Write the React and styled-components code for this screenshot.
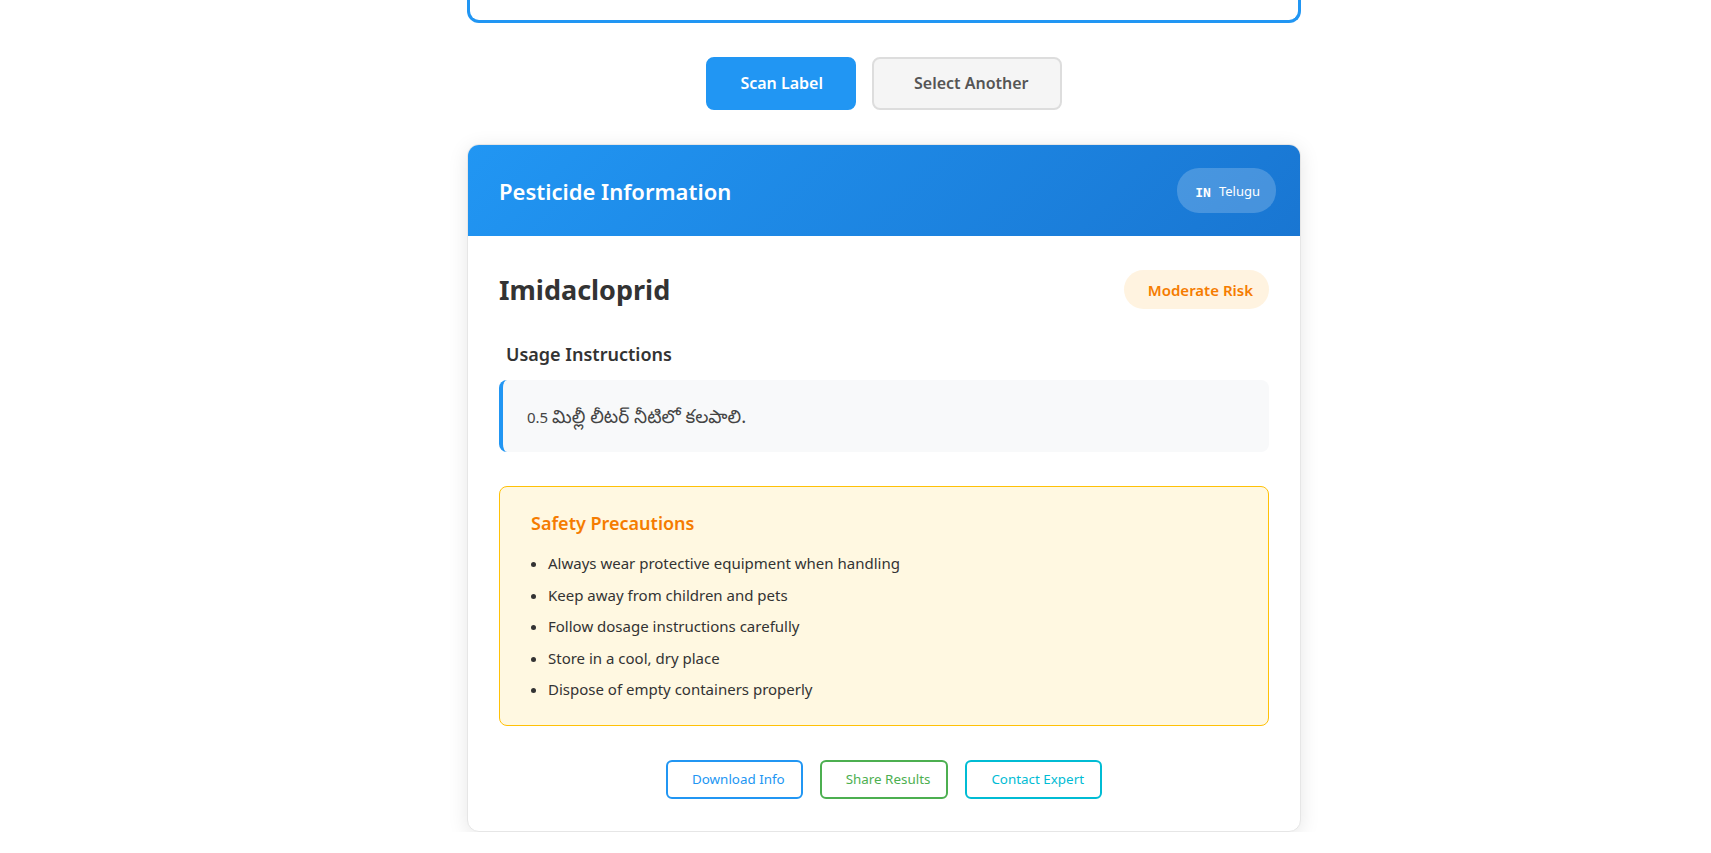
import React from 'react';
import styled, { createGlobalStyle } from 'styled-components';

const GlobalStyle = createGlobalStyle`
    body {
        margin: 0;
        background: #ffffff;
        font-family: 'Segoe UI', 'Noto Sans', 'Noto Sans Telugu', sans-serif;
        color: #333333;
    }
`;

const Page = styled.div`
    padding-left: 57px;
    display: flex;
    justify-content: center;
`;

const Column = styled.div`
    width: 834px;
    display: flex;
    flex-direction: column;
`;

// 스크롤로 잘린 이미지 미리보기 박스의 아랫부분
const PreviewEdge = styled.div`
    height: 20px;
    border: 3px solid #2196f3;
    border-top: none;
    border-radius: 0 0 12px 12px;
`;

const ControlRow = styled.div`
    display: flex;
    justify-content: center;
    gap: 16px;
    margin: 34px 0;
`;

const ControlButton = styled.button`
    font-family: inherit;
    font-size: 16px;
    font-weight: 600;
    line-height: 21px;
    padding: 14px 31px 14px ${p => (p.primary ? '32px' : '40px')};
    border-radius: 8px;
    border: 2px solid ${p => (p.primary ? '#2196f3' : '#dddddd')};
    background: ${p => (p.primary ? '#2196f3' : '#f5f5f5')};
    color: ${p => (p.primary ? '#ffffff' : '#555555')};
    cursor: pointer;
`;

const Card = styled.div`
    background: #ffffff;
    border-radius: 12px;
    overflow: hidden;
    box-shadow: 0 4px 20px rgba(0, 0, 0, 0.1);
    border: 1px solid #e6e6e6;
`;

const CardHeader = styled.div`
    display: flex;
    justify-content: space-between;
    align-items: center;
    padding: 23px 24px 23px 31px;
    background: linear-gradient(135deg, #2196f3 0%, #1976d2 100%);
    color: #ffffff;
`;

const HeaderTitle = styled.h2`
    margin: 0;
    font-size: 22px;
    font-weight: 600;
`;

const LangPill = styled.div`
    display: flex;
    align-items: center;
    gap: 8px;
    height: 45px;
    padding: 0 16px 0 18px;
    border-radius: 22px;
    background: rgba(255, 255, 255, 0.2);
    font-size: 13px;
`;

const Flag = styled.span`
    font-family: 'DejaVu Sans Mono', monospace;
    font-weight: 700;
    font-size: 13px;
    margin-top: 3px;
`;

const CardBody = styled.div`
    padding: 32px 31px 32px 31px;
`;

const NameRow = styled.div`
    display: flex;
    justify-content: space-between;
    align-items: center;
    height: 43px;
    margin-bottom: 31px;
`;

const Name = styled.h1`
    margin: 0;
    font-size: 27px;
    font-weight: 700;
    color: #333333;
`;

const RiskBadge = styled.span`
    display: inline-flex;
    align-items: center;
    height: 39px;
    padding: 0 16px 0 24px;
    border-radius: 20px;
    background: #fff3e0;
    color: #f57c00;
    font-size: 15px;
    font-weight: 600;
`;

const SectionTitle = styled.h3`
    margin: 0 0 14px 7px;
    font-size: 18px;
    font-weight: 600;
    line-height: 24px;
    color: #333333;
`;

const UsageBox = styled.div`
    background: #f8f9fa;
    border-left: 4px solid #2196f3;
    border-radius: 8px;
    padding: 23px 24px 22px 24px;
    font-size: 15px;
    line-height: 25px;
    color: #444444;
`;

const TeluguText = styled.span`
    font-size: 18.6px;
    line-height: 25px;
`;

const SafetyBox = styled.div`
    margin-top: 34px;
    background: #fff8e1;
    border: 1px solid #ffc107;
    border-radius: 8px;
    padding: 24px 31px 24px 31px;
`;

const SafetyTitle = styled.h3`
    margin: 0 0 16px 0;
    font-size: 18px;
    font-weight: 600;
    line-height: 24px;
    color: #f57c00;
`;

const SafetyList = styled.ul`
    margin: 0;
    padding-left: 17px;
`;

const SafetyItem = styled.li`
    font-size: 15px;
    line-height: 24px;
    color: #333333;
    & + & {
        margin-top: 7.6px;
    }
`;

const ActionRow = styled.div`
    display: flex;
    justify-content: center;
    gap: 17px;
    margin-top: 34px;
`;

const ActionButton = styled.button`
    font-family: inherit;
    font-size: 13.4px;
    line-height: 19px;
    padding: 8px 16px 8px 24px;
    border-radius: 6px;
    background: #ffffff;
    border: 2px solid ${p => p.tone};
    color: ${p => p.tone};
    cursor: pointer;
`;

const precautions = [
    'Always wear protective equipment when handling',
    'Keep away from children and pets',
    'Follow dosage instructions carefully',
    'Store in a cool, dry place',
    'Dispose of empty containers properly',
];

const App = () => {
    return (
        <Page>
            <GlobalStyle />
            <Column>
                <PreviewEdge />
                <ControlRow>
                    <ControlButton primary>Scan Label</ControlButton>
                    <ControlButton>Select Another</ControlButton>
                </ControlRow>
                <Card>
                    <CardHeader>
                        <HeaderTitle>Pesticide Information</HeaderTitle>
                        <LangPill>
                            <Flag>IN</Flag>
                            <span>Telugu</span>
                        </LangPill>
                    </CardHeader>
                    <CardBody>
                        <NameRow>
                            <Name>Imidacloprid</Name>
                            <RiskBadge>Moderate Risk</RiskBadge>
                        </NameRow>
                        <SectionTitle>Usage Instructions</SectionTitle>
                        <UsageBox>
                            0.5 <TeluguText>మిల్లీ లీటర్ నీటిలో కలపాలి.</TeluguText>
                        </UsageBox>
                        <SafetyBox>
                            <SafetyTitle>Safety Precautions</SafetyTitle>
                            <SafetyList>
                                {precautions.map(item => (
                                    <SafetyItem key={item}>{item}</SafetyItem>
                                ))}
                            </SafetyList>
                        </SafetyBox>
                        <ActionRow>
                            <ActionButton tone="#2196f3">Download Info</ActionButton>
                            <ActionButton tone="#4caf50">Share Results</ActionButton>
                            <ActionButton tone="#00bcd4">Contact Expert</ActionButton>
                        </ActionRow>
                    </CardBody>
                </Card>
            </Column>
        </Page>
    );
};

export default App;
